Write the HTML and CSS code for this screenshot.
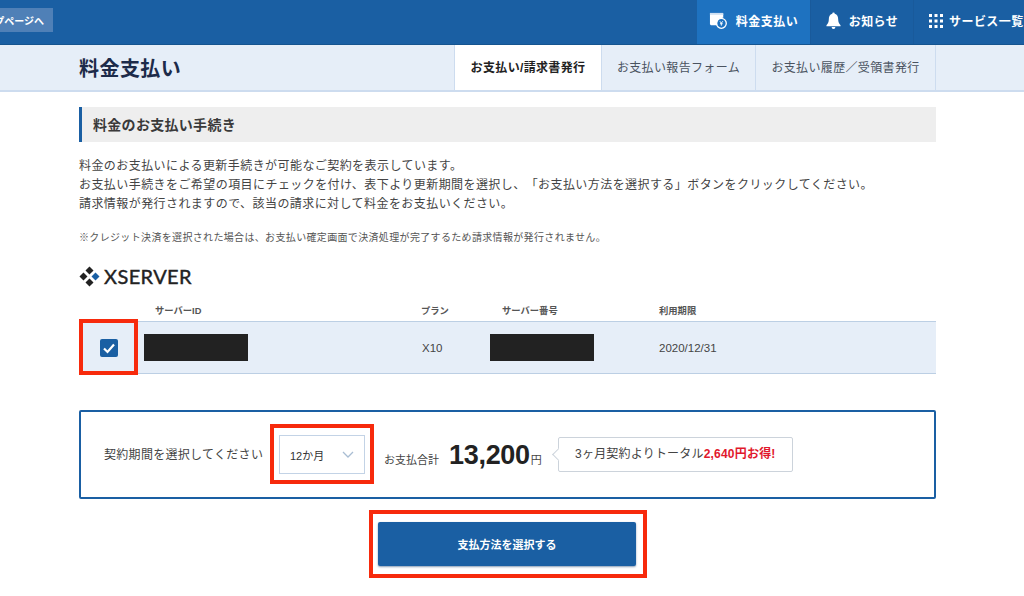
FILE: index.html
```html
<!DOCTYPE html>
<html lang="ja">
<head>
<meta charset="utf-8">
<title>料金支払い</title>
<link rel="stylesheet" href="styles.css">
</head>
<body>
<header class="topbar">
  <a class="back"><span>トップページへ</span></a>
  <nav class="topnav">
    <a class="topnav-item active">
      <svg class="ico-pay" viewBox="0 0 20 20" width="19" height="19"><path d="M1 2h13l1 1v4a6 6 0 0 0-6 8H2l-1-1z" fill="#fff"/><path d="M1 2h14v2H1z" fill="#cfe0f2"/><circle cx="13" cy="13" r="5.2" fill="none" stroke="#fff" stroke-width="1.4"/><path d="M11.5 10.8l1.5 2 1.5-2M13 12.8v2.6M11.6 13.4h2.8" stroke="#fff" stroke-width="1" fill="none"/></svg>
      料金支払い
    </a>
    <a class="topnav-item">
      <svg viewBox="0 0 16 18" width="15" height="17"><path d="M8 0.5a1.3 1.3 0 0 1 1.3 1.4C12 2.600 13 5 13 8c0 3 1 4.500 2.500 6v1H.5v-1C2 12.500 3 11 3 8c0-3 1-5.400 3.700-6.100A1.300 1.300 0 0 1 8 .5zM6 16h4a2 2 0 0 1-4 0z" fill="#fff"/></svg>
      お知らせ
    </a>
    <a class="topnav-item">
      <svg viewBox="0 0 14 14" width="14" height="14" fill="#fff"><rect x="0" y="0" width="3" height="3"/><rect x="5.500" y="0" width="3" height="3"/><rect x="11" y="0" width="3" height="3"/><rect x="0" y="5.500" width="3" height="3"/><rect x="5.500" y="5.500" width="3" height="3"/><rect x="11" y="5.500" width="3" height="3"/><rect x="0" y="11" width="3" height="3"/><rect x="5.500" y="11" width="3" height="3"/><rect x="11" y="11" width="3" height="3"/></svg>
      サービス一覧
    </a>
  </nav>
</header>

<div class="subhead">
  <div class="subhead-inner">
    <h1 class="page-title">料金支払い</h1>
    <ul class="tabs">
      <li class="tab current">お支払い/請求書発行</li>
      <li class="tab">お支払い報告フォーム</li>
      <li class="tab">お支払い履歴／受領書発行</li>
    </ul>
  </div>
</div>

<main class="content">
  <h2 class="section-title">料金のお支払い手続き</h2>
  <p class="lead">料金のお支払いによる更新手続きが可能なご契約を表示しています。<br>お支払い手続きをご希望の項目にチェックを付け、表下より更新期間を選択し、「お支払い方法を選択する」ボタンをクリックしてください。<br>請求情報が発行されますので、該当の請求に対して料金をお支払いください。</p>
  <p class="note">※クレジット決済を選択された場合は、お支払い確定画面で決済処理が完了するため請求情報が発行されません。</p>

  <div class="brand">
    <svg viewBox="0 0 22 22" width="21" height="21"><path d="M11 .5l4.200 4.200L11 8.900 6.800 4.700zM11 13.100l4.200 4.200L11 21.500l-4.200-4.200zM4.700 6.800L8.900 11l-4.200 4.200L.5 11z" fill="#222"/><path d="M17.300 6.800L21.500 11l-4.200 4.200L13.100 11z" fill="#1a5fa3"/></svg>
    <span>XSERVER</span>
  </div>

  <div class="thead">
    <span></span><span>サーバーID</span><span>プラン</span><span>サーバー番号</span><span>利用期限</span>
  </div>
  <div class="trow">
    <span class="cell-check">
      <span class="checkbox"><svg viewBox="0 0 18 18" width="18" height="18"><path d="M4 9.500l3.500 3.500L14 5.500" fill="none" stroke="#fff" stroke-width="2.200"/></svg></span>
      <i class="mark mark-check"></i>
    </span>
    <span class="redact"></span>
    <span class="plan">X10</span>
    <span class="redact"></span>
    <span class="date">2020/12/31</span>
  </div>

  <section class="panel">
    <span class="panel-label">契約期間を選択してください</span>
    <span class="select">12か月
      <svg viewBox="0 0 12 7" width="12" height="7"><path d="M1 1l5 5 5-5" fill="none" stroke="#a9bdd3" stroke-width="1.300"/></svg>
      <i class="mark mark-select"></i>
    </span>
    <span class="total-label">お支払合計</span>
    <strong class="total">13,200</strong>
    <span class="yen">円</span>
    <span class="callout">3ヶ月契約よりトータル<b>2,640円お得!</b></span>
  </section>

  <div class="actions">
    <a class="pay-btn">支払方法を選択する<i class="mark mark-btn"></i></a>
  </div>
</main>
</body>
</html>
```

FILE: styles.css
```css
* { box-sizing: border-box; }
html, body { margin: 0; padding: 0; }
body {
  width: 1024px;
  height: 596px;
  overflow: hidden;
  background: #fff;
  color: #333;
  font-family: "Liberation Sans", "Noto Sans CJK JP", sans-serif;
  font-size: 12px;
  text-spacing-trim: space-all;
}
a { color: inherit; text-decoration: none; }

.topbar {
  height: 45px;
  background: #1a5fa3;
  border-bottom: 1px solid #15548f;
  display: flex;
  justify-content: space-between;
  overflow: hidden;
}
.back {
  width: 53px;
  height: 24px;
  margin-top: 8px;
  background: #4f80b7;
  color: #fff;
  font-size: 10px;
  font-weight: 700;
  display: flex;
  justify-content: flex-end;
  align-items: center;
  padding-right: 9px;
  white-space: nowrap;
  overflow: hidden;
}
.back span { flex: none; }
.topnav { display: flex; width: 327px; flex: none; }
.topnav-item {
  display: flex;
  align-items: center;
  justify-content: center;
  gap: 8px;
  color: #fff;
  font-size: 12px;
  letter-spacing: .45px;
  font-weight: 700;
  height: 44px;
  padding-bottom: 3px;
  width: 103px;
  white-space: nowrap;
  flex: none;
  border-right: 1px solid #195a9b;
}
.topnav-item.active { width: 114px; background: #1e72c0; }
.topnav-item:last-child { width: 110px; justify-content: flex-start; padding-left: 15px; gap: 6px; border: 0; }

.subhead {
  height: 47px;
  background: #e6eef8;
  border-bottom: 2px solid #cddcef;
}
.subhead-inner {
  margin-left: 79px;
  width: 857px;
  height: 45px;
  display: flex;
  justify-content: space-between;
}
.page-title {
  margin: 0;
  padding-top: 2px;
  font-size: 20px;
  letter-spacing: .45px;
  line-height: 45px;
  font-weight: 700;
  color: #1d2b4a;
}
.tabs { list-style: none; margin: 0; padding: 0; display: flex; }
.tab {
  height: 45px;
  line-height: 46px;
  padding: 0 15px;
  font-size: 12px;
  letter-spacing: .35px;
  color: #4a5360;
  border-left: 1px solid #cddcef;
  white-space: nowrap;
}
.tab:last-child { border-right: 1px solid #cddcef; }
.tab.current { background: #fff; color: #222; font-weight: 700; width: 147px; padding: 0; text-align: center; }
.tab:nth-child(2) { width: 154px; padding: 0; text-align: center; }
.tab:nth-child(3) { width: 181px; padding: 0; text-align: center; }

.content { margin: 15px 0 0 79px; width: 857px; }
.section-title {
  margin: 0;
  height: 35px;
  line-height: 36px;
  padding-left: 11px;
  background: #eeeeee;
  border-left: 3px solid #1a5fa3;
  font-size: 14px;
  letter-spacing: .3px;
  font-weight: 700;
  color: #3a3a3a;
}
.lead {
  margin: 15px 0 0;
  font-size: 12px;
  letter-spacing: .43px;
  line-height: 19px;
  color: #444;
  white-space: nowrap;
}
.note {
  margin: 16px 0 0;
  font-size: 10px;
  letter-spacing: .34px;
  line-height: 16px;
  color: #555;
}
.brand {
  margin-top: 19px;
  height: 22px;
  display: flex;
  align-items: center;
  gap: 4px;
  font-family: "Lato", "Liberation Sans", sans-serif;
  font-size: 20px;
  letter-spacing: .4px;
  font-weight: 400;
  -webkit-text-stroke: .4px #222;
  color: #222;
}
.thead, .trow {
  display: grid;
  grid-template-columns: 65px 266px 81px 157px 1fr;
  align-items: center;
}
.thead {
  margin-top: 14px;
  height: 20px;
  font-size: 9.300px;
  font-weight: 700;
  color: #555;
  padding-left: 11px;
  padding-bottom: 2px;
}
.trow {
  grid-template-columns: 65px 278px 68px 169px 1fr;
  height: 53px;
  background: #e6eef8;
  border-top: 1px solid #bccfe4;
  border-bottom: 1px solid #bccfe4;
  font-size: 11.500px;
  color: #444;
}
.cell-check { position: relative; display: flex; justify-content: center; height: 100%; align-items: center; padding-right: 6px; }
.checkbox {
  width: 18px;
  height: 18px;
  background: #1a5fa3;
  border-radius: 2px;
  display: block;
}
.checkbox svg { display: block; }
.redact { width: 104px; height: 27px; background: #222; display: block; }

.mark { position: absolute; display: block; border: 4px solid #f72a0c; pointer-events: none; }
.mark-check { left: 0; top: -3px; width: 59px; height: 56px; }
.mark-select { left: -10px; top: -12px; width: 104px; height: 60px; }
.mark-btn { left: -9px; top: -12px; width: 278px; height: 68px; }

.panel {
  margin-top: 36px;
  height: 89px;
  border: 2px solid #1a5fa3;
  border-radius: 2px;
  display: flex;
  align-items: center;
  padding-left: 23px;
}
.panel-label { font-size: 12px; letter-spacing: .3px; color: #444; width: 175px; flex: none; margin-top: -3px; white-space: nowrap; }
.select {
  position: relative;
  width: 86px;
  height: 39px;
  border: 1px solid #c3d3e6;
  background: #fff;
  flex: none;
  display: flex;
  align-items: center;
  justify-content: space-between;
  padding: 0 10px;
  font-size: 11px;
  color: #333;
}
.total-label { margin-left: 19px; font-size: 11px; color: #444; margin-top: 8px; white-space: nowrap; }
.total { margin-left: 10px; font-size: 27px; letter-spacing: -0.300px; color: #222; font-weight: 700; margin-top: 2px; }
.yen { font-size: 11px; color: #444; margin-left: 1px; margin-top: 8px; }
.callout {
  position: relative;
  margin-left: 16px;
  width: 235px;
  height: 35px;
  line-height: 33px;
  text-align: center;
  border: 1px solid #ccd3db;
  border-radius: 2px;
  background: #fff;
  font-size: 12px;
  letter-spacing: .2px;
  color: #444;
  white-space: nowrap;
}
.callout::before {
  content: "";
  position: absolute;
  left: -5px;
  top: 12px;
  width: 8px;
  height: 8px;
  background: #fff;
  border-left: 1px solid #ccd3db;
  border-bottom: 1px solid #ccd3db;
  transform: rotate(45deg);
}
.callout b { color: #e1182c; }
.actions { display: flex; justify-content: center; margin-top: 23px; }
.pay-btn {
  position: relative;
  width: 258px;
  height: 44px;
  margin-right: 1px;
  background: #1a5fa3;
  border-radius: 2px;
  box-shadow: 0 1px 2px rgba(20,60,110,.5);
  color: #fff;
  font-size: 11px;
  font-weight: 700;
  display: flex;
  align-items: center;
  justify-content: center;
}
```
